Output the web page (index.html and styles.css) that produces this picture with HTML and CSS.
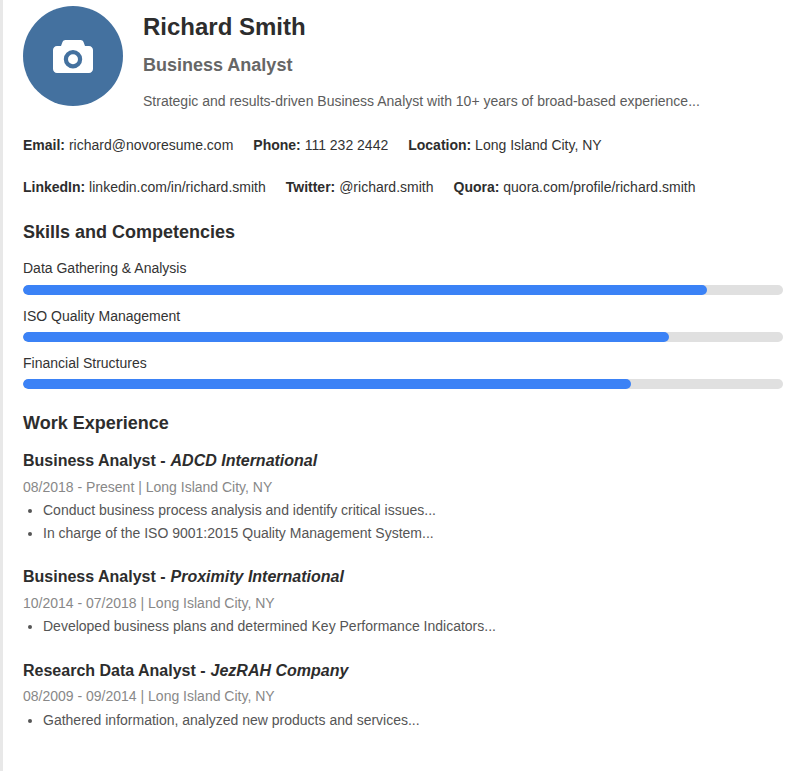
FILE: index.html
```html
<!DOCTYPE html>
<html lang="en">
<head>
<meta charset="utf-8">
<title>Richard Smith</title>
<link rel="stylesheet" href="styles.css">
</head>
<body>
<main class="resume">
  <header class="head">
    <div class="avatar">
      <svg class="cam" viewBox="0 0 40 33" width="40" height="33" aria-hidden="true">
        <path fill="#fff" fill-rule="evenodd" d="M9.500 2C10 .8 11 0 12.500 0h15c1.500 0 2.500.8 3 2L32 6h4c2.200 0 4 1.800 4 4v19c0 2.200-1.800 4-4 4H4c-2.200 0-4-1.800-4-4V10c0-2.200 1.800-4 4-4h4ZM20 10a9.200 9.200 0 1 0 0 18.400a9.200 9.200 0 1 0 0-18.400Zm0 4.200a5 5 0 1 1 0 10a5 5 0 1 1 0-10Z"/>
      </svg>
    </div>
    <div class="intro">
      <h1 class="name">Richard Smith</h1>
      <h2 class="role">Business Analyst</h2>
      <p class="summary">Strategic and results-driven Business Analyst with 10+ years of broad-based experience...</p>
    </div>
  </header>
  <div class="contact">
    <span><b>Email:</b> richard@novoresume.com</span>
    <span><b>Phone:</b> 111 232 2442</span>
    <span><b>Location:</b> Long Island City, NY</span>
  </div>
  <div class="contact">
    <span><b>LinkedIn:</b> linkedin.com/in/richard.smith</span>
    <span><b>Twitter:</b> @richard.smith</span>
    <span><b>Quora:</b> quora.com/profile/richard.smith</span>
  </div>
  <section class="skills">
    <h3 class="section-title">Skills and Competencies</h3>
    <div class="skill"><div class="skill-name">Data Gathering &amp; Analysis</div><div class="track"><div class="fill" style="width:90%"></div></div></div>
    <div class="skill"><div class="skill-name">ISO Quality Management</div><div class="track"><div class="fill" style="width:85%"></div></div></div>
    <div class="skill"><div class="skill-name">Financial Structures</div><div class="track"><div class="fill" style="width:80%"></div></div></div>
  </section>
  <section class="work">
    <h3 class="section-title">Work Experience</h3>
    <article class="job">
      <h4 class="job-title">Business Analyst - <em>ADCD International</em></h4>
      <div class="job-meta">08/2018 - Present | Long Island City, NY</div>
      <ul class="job-list">
        <li>Conduct business process analysis and identify critical issues...</li>
        <li>In charge of the ISO 9001:2015 Quality Management System...</li>
      </ul>
    </article>
    <article class="job">
      <h4 class="job-title">Business Analyst - <em>Proximity International</em></h4>
      <div class="job-meta">10/2014 - 07/2018 | Long Island City, NY</div>
      <ul class="job-list">
        <li>Developed business plans and determined Key Performance Indicators...</li>
      </ul>
    </article>
    <article class="job">
      <h4 class="job-title">Research Data Analyst - <em>JezRAH Company</em></h4>
      <div class="job-meta">08/2009 - 09/2014 | Long Island City, NY</div>
      <ul class="job-list">
        <li>Gathered information, analyzed new products and services...</li>
      </ul>
    </article>
  </section>
</main>
</body>
</html>
```
FILE: styles.css
```css
* { box-sizing: border-box; }
html, body { margin: 0; padding: 0; background: #fff; }
body {
  font-family: "Liberation Sans", Arial, sans-serif;
  font-size: 14px;
  line-height: 1.6;
  color: #333;
  min-height: 771px;
  border-left: 3px solid #e8e8e8;
}
.resume { padding: 6px 20px 0 20px; }
.head { display: flex; gap: 20px; }
.avatar {
  width: 100px;
  height: 100px;
  border-radius: 50%;
  background: #44719f;
  display: flex;
  align-items: center;
  justify-content: center;
  flex: none;
}
.cam { display: block; }
.name { margin: 1.800px 0 0; font-size: 24px; font-weight: 700; color: #2d2d2d; }
.role { margin: 4.900px 0 0; font-size: 18px; font-weight: 700; color: #666; }
.summary { margin: 9.900px 0 0; color: #5c5c5c; }
.contact { display: flex; gap: 20px; margin-top: 19.600px; color: #333; }
.contact b { color: #2d2d2d; }
.head + .contact { margin-top: 21.800px; }
.section-title { margin: 0; font-size: 18px; font-weight: 700; color: #2d2d2d; }
.skills { margin-top: 19.200px; }
.section-title + .skill { margin-top: 11px; }
.skill + .skill { margin-top: 9.800px; }
.skill-name { color: #333; }
.track { height: 10px; margin-top: 5px; background: #e0e0e0; border-radius: 5px; overflow: hidden; }
.fill { height: 100%; background: #3b82f6; border-radius: 5px; }
.work { margin-top: 20px; }
.job { margin-top: 20.200px; }
.section-title + .job { margin-top: 10.300px; }
.job-title { margin: 0; font-size: 16px; font-weight: 700; color: #2d2d2d; }
.job-title em { margin-left: .5px; }
.job-meta { margin-top: 2px; color: #888; }
.job-list { margin: 1px 0 0; padding: 0 0 0 20px; color: #555; }
```
